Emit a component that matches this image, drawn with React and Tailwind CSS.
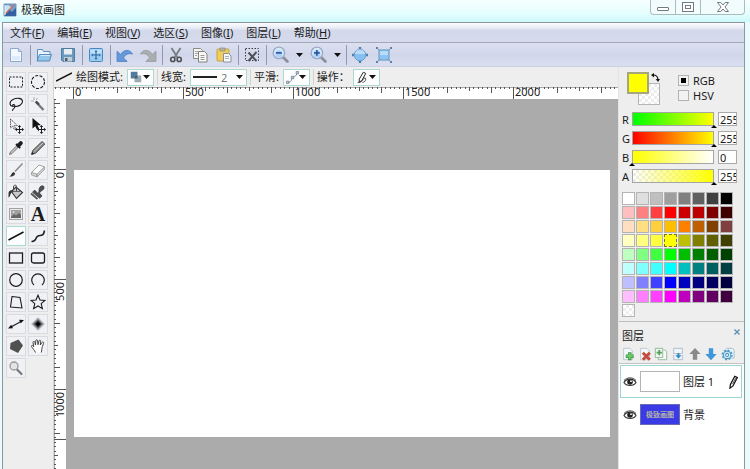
import { useState } from "react";

const MENUS = [
  ["文件", "F"],
  ["编辑", "E"],
  ["视图", "V"],
  ["选区", "S"],
  ["图像", "I"],
  ["图层", "L"],
  ["帮助", "H"],
];

function Svg({ size = 16, className = "", children }) {
  return (
    <svg width={size} height={size} viewBox="0 0 16 16" fill="none" className={className} aria-hidden="true">
      {children}
    </svg>
  );
}

function Caret() {
  return (
    <svg width="7" height="4" viewBox="0 0 7 4" className="shrink-0" aria-hidden="true">
      <path d="M0 0h7L3.5 4z" fill="#111" />
    </svg>
  );
}

function Magnifier({ plus }) {
  return (
    <Svg size={17}>
      <path d="M10.500 10.500l4 4" stroke="#8d8f98" strokeWidth="2.600" strokeLinecap="round" />
      <circle cx="6.500" cy="6.500" r="5.400" fill="#d8e9fa" stroke="#9aa9c6" strokeWidth="1.300" />
      <circle cx="6.500" cy="7.500" r="3.400" fill="#aed2f5" />
      <path d="M3.800 6.500h5.400" stroke="#26509b" strokeWidth="1.500" />
      {plus && <path d="M6.500 3.800v5.400" stroke="#26509b" strokeWidth="1.500" />}
    </Svg>
  );
}

const bar = {
  newFile: (
    <Svg>
      <path d="M2.500 1.500h8l3 3v10h-11z" fill="#f2f8ff" stroke="#8fa9cd" />
      <path d="M4 9h8v4H4z" fill="#dcebfb" />
      <path d="M10.500 1.500v3h3" fill="#c9dcf3" stroke="#8fa9cd" />
    </Svg>
  ),
  open: (
    <Svg>
      <path d="M1.500 13.500V2.500h5l1 2h6.500v3" fill="#e9f3fc" stroke="#5f8fba" />
      <path d="M1 14l2.500-6.500h12L13.500 14z" fill="#94c6ea" stroke="#4d86b8" strokeWidth=".9" />
      <path d="M4.500 8.500h9.500" stroke="#d0e8fa" />
    </Svg>
  ),
  save: (
    <Svg>
      <path d="M1.500 1.500h13v13H3l-1.500-1.500z" fill="#6a9abf" stroke="#517c9e" />
      <path d="M4 2h8v5.500H4z" fill="#e6eef2" />
      <path d="M4 10h8v4.500H4z" fill="#c3cdd3" />
      <path d="M5 11h2.500v3H5z" fill="#44637b" />
    </Svg>
  ),
  fit: (
    <Svg>
      <rect x="1.500" y="1.500" width="13" height="13" rx="1" fill="#9accf1" stroke="#4a87bf" />
      <path d="M2.500 2.500h11v4h-11z" fill="#bfe0f8" />
      <path d="M8 4v8M4 8h8" stroke="#2f6ba6" strokeWidth="1.200" />
      <path d="M8 3l1.500 1.800h-3zM8 13l1.500-1.800h-3zM3 8l1.800-1.500v3zM13 8l-1.800-1.500v3z" fill="#2f6ba6" />
    </Svg>
  ),
  undo: (
    <Svg size={17}>
      <path d="M1 5v9.500h9.500L7 11.200C9 7.500 12 6.500 15.500 7.600 13 2.800 7.500 3 4.300 8z" fill="#6699dc" stroke="#4a7fc4" strokeWidth=".8" />
    </Svg>
  ),
  redo: (
    <Svg size={17}>
      <path d="M15 5v9.500H5.500L9 11.200C7 7.500 4 6.500.5 7.600 3 2.800 8.500 3 11.700 8z" fill="#aaaeb0" stroke="#96999b" strokeWidth=".8" />
    </Svg>
  ),
  cut: (
    <Svg>
      <path d="M3.500 1l6 9.500M12.500 1l-6 9.500" stroke="#7b7f84" strokeWidth="1.900" />
      <circle cx="4.800" cy="12.400" r="2.100" stroke="#4d5156" strokeWidth="1.600" />
      <circle cx="11.200" cy="12.400" r="2.100" stroke="#4d5156" strokeWidth="1.600" />
    </Svg>
  ),
  copy: (
    <Svg>
      <path d="M1.500 1.500h7l2 2v8h-9z" fill="#f5f5f3" stroke="#8a8a88" />
      <path d="M3 4.500h4M3 6.500h4M3 8.500h2" stroke="#a5a5a5" />
      <path d="M6.500 4.500h6l2.500 2.500v8H6.500z" fill="#f8f8f6" stroke="#81817f" />
      <path d="M8.500 8.500h4M8.500 10.500h4M8.500 12.500h4" stroke="#989898" />
    </Svg>
  ),
  paste: (
    <Svg>
      <rect x="1" y="2" width="12" height="12" rx="1" fill="#f2cd58" stroke="#c7a245" />
      <path d="M4 1h5v3H4z" fill="#b5b4a5" stroke="#8a8982" strokeWidth=".7" />
      <path d="M7.500 6.500h5l2.500 2.500v6H7.500z" fill="#f7f8fa" stroke="#87909c" />
      <path d="M9 9.500h4M9 11.500h4" stroke="#a7b0bd" />
    </Svg>
  ),
  deselect: (
    <Svg>
      <rect x="1.500" y="1.500" width="13" height="12" stroke="#3a3b42" strokeDasharray="1.500 1.500" />
      <path d="M4.500 5.500l8 8.500M12.500 5l-8 9" stroke="#4c4e57" strokeWidth="1.900" />
    </Svg>
  ),
  actual: (
    <Svg>
      <path d="M8 0v3M8 13v3M0 8h3M13 8h3" stroke="#4f7eab" strokeWidth="2.400" />
      <circle cx="8" cy="8" r="5.800" fill="#86c0f0" stroke="#6f9cc9" />
      <path d="M3 7a5 4.500 0 0 1 10 0z" fill="#b9dcf8" />
    </Svg>
  ),
  expand: (
    <Svg>
      <path d="M1 1l3 3M15 1l-3 3M1 15l3-3M15 15l-3-3" stroke="#6b8db0" />
      <rect x="3" y="3" width="10" height="10" fill="#8cc4f2" stroke="#6794c1" />
      <path d="M4 4h8v4H4z" fill="#b8dcf8" />
      <path d="M0 0h2v2H0zM14 0h2v2h-2zM0 14h2v2H0zM14 14h2v2h-2z" fill="#5c7fa4" />
    </Svg>
  ),
};

function BarButton({ label, children }) {
  return (
    <button type="button" aria-label={label} className="flex h-6 w-6 items-center justify-center hover:bg-white/50">
      {children}
    </button>
  );
}

function BarCaret({ label }) {
  return (
    <button type="button" aria-label={label} aria-haspopup="menu" className="flex h-6 w-[14px] items-center justify-center">
      <Caret />
    </button>
  );
}

function Sep() {
  return (
    <span className="flex w-1 justify-center">
      <span className="h-5 w-px bg-[#9298ad]" />
    </span>
  );
}

const K = "#1d1d1f";
const TOOLS = [
  ["矩形选区", <Svg><rect x="1.500" y="3" width="13" height="10" stroke={K} strokeDasharray="2 1.300" /></Svg>],
  ["椭圆选区", <Svg><circle cx="8" cy="8" r="6.500" stroke={K} strokeDasharray="3 1.500" strokeWidth="1.100" /></Svg>],
  ["套索", <Svg><path d="M5 10.500C1 10 1 5.500 5 3.500s9-1.500 9.500 1.500-3.500 6-8 5.500c-2-.3-2.500-1.700-1-2s2 2 .8 3.500-2 1.500-1.800 2.800" stroke={K} strokeWidth="1.100" /></Svg>],
  ["魔棒", <Svg><path d="M5.500 5.500l8 8.500" stroke="#777" strokeWidth="2.400" /><path d="M6 5.500l3 3" stroke="#444" strokeWidth="2" /><path d="M4 1v3M1 5h3M7.500 2L6 4" stroke="#aaa" /></Svg>],
  ["移动选区", <Svg><path d="M2.500 1v9l2.200-2 1.500 3.500 1.500-.7L6.300 7.500h3z" stroke="#444" strokeWidth=".9" strokeDasharray="1.500 .8" /><path d="M11.500 8v7M8 11.500h7" stroke={K} /><path d="M11.500 7l1.700 2H9.800zM11.500 16l1.700-2H9.800zM7 11.500l2-1.700v3.400zM16 11.500l-2-1.700v3.400z" fill={K} /></Svg>],
  ["移动像素", <Svg><path d="M2.500 0v10.500l2.700-2.200L7 11.500l2-1-1.600-3.300H11z" fill="#111" /><path d="M11.500 8v7M8 11.500h7" stroke={K} /><path d="M11.500 7l1.700 2H9.800zM11.500 16l1.700-2H9.800zM7 11.500l2-1.700v3.400zM16 11.500l-2-1.700v3.400z" fill={K} /></Svg>],
  ["取色器", <Svg><path d="M1.500 14.500l1-2.500L9 5.500 10.500 7 4 13.500z" fill="#c9c9c9" stroke="#666" strokeWidth=".9" /><path d="M8 4l4.200 4.200" stroke={K} strokeWidth="1.800" /><path d="M10.500 5.500L12.800 3.200" stroke={K} strokeWidth="4" strokeLinecap="round" /></Svg>],
  ["铅笔", <Svg><path d="M1.500 14.500l1.200-4L12 1.500 14.800 4 5.600 13.300z" fill="#888" stroke="#444" strokeWidth=".9" /><path d="M4 11.500L13 3" stroke="#ccc" /><path d="M1.500 14.500l.7-2.300 1.700 1.600z" fill="#111" /></Svg>],
  ["画笔", <Svg><path d="M14.500 1.500L7 9.500" stroke="#8a8a8a" strokeWidth="1.500" /><path d="M1 14.500c2.500-.5 2-3.300 4.500-4.500l1.700 1.500c-.5 2.500-3.200 3.300-6.200 3z" fill="#333" /></Svg>],
  ["橡皮擦", <Svg><path d="M1.500 10.500L9 3l5.500 2-7.500 8.500z" fill="#fafafa" stroke="#999" strokeWidth=".9" /><path d="M1.500 10.500L7 12v3l-5.500-2zM7 12l7.500-7v2.500L7 15z" fill="#d1d1d1" stroke="#909090" strokeWidth=".7" /></Svg>],
  ["油漆桶", <Svg><path d="M3.500 7.500L8 3l6.500 5.500-6 6z" fill="#c9c9c9" stroke="#333" strokeWidth="1.100" /><path d="M5 7.500h8" stroke="#666" /><path d="M8.500 7V2.500C8.500.5 5.500.7 5.500 3v3" stroke="#444" /><path d="M5.500 6.500C2 5.500.5 7 .5 9.500v4c2 0 1.500-4.500 3.500-5z" fill="#333" /></Svg>],
  ["图章", <Svg><path d="M8 9.500c2-2.300 0-4 2-6.500 1.700-2.100 4.700-1.200 4 1.200C13 7 10.300 6.500 9.500 9l2.500 3-2.300 2.200L2.500 8.300 4.700 6z" fill="#505050" stroke="#333" strokeWidth=".7" /><path d="M1 9.500l6.500 5.500" stroke="#555" strokeWidth="1.800" /></Svg>],
  ["图片", <Svg><rect x="1.500" y="2.500" width="13" height="11" fill="#e9e9e9" stroke="#a2a2a2" /><rect x="3" y="4" width="10" height="8" fill="#a0a0a0" /><path d="M3 11l3-3 2 1.500 3-2.500 2 2v3H3z" fill="#666" /><circle cx="5.500" cy="6" r="1" fill="#ddd" /></Svg>],
  ["文字", "A"],
  ["直线", <Svg><path d="M.5 12l15-8" stroke="#111" strokeWidth="1.500" /></Svg>],
  ["曲线", <Svg><path d="M1.500 13.500c5.500.5 3.500-4.500 6.500-5.500s5.500.5 6.500-5.500" stroke="#222" strokeWidth="1.600" /></Svg>],
  ["矩形", <Svg><rect x="1.500" y="3" width="13" height="10" stroke={K} strokeWidth="1.300" /></Svg>],
  ["圆角矩形", <Svg><rect x="1.500" y="3" width="13" height="10" rx="2" stroke={K} strokeWidth="1.300" /></Svg>],
  ["椭圆", <Svg><circle cx="8" cy="8" r="6.300" stroke={K} strokeWidth="1.200" /></Svg>],
  ["弧形", <Svg><path d="M4 13a6.300 6.300 0 1 1 8 0" stroke={K} strokeWidth="1.200" /></Svg>],
  ["多边形", <Svg><path d="M4 2.500l8 1 2 10.500-11.500-1z" stroke={K} strokeWidth="1.100" /></Svg>],
  ["星形", <Svg><path d="M8 1.200l2 4.800 5 .4-3.800 3.300 1.200 5L8 12l-4.400 2.700 1.200-5L1 6.400 6 6z" stroke={K} strokeWidth="1.100" /></Svg>],
  ["箭头", <Svg><path d="M2 11.500L14 5" stroke={K} strokeWidth="1.200" /><path d="M0 12.500l3.200-3.700L5 12.300zM16 4l-5-.2 1.800 3.500z" fill="#111" /></Svg>],
  ["渐变", <Svg><path d="M8 1l7 7-7 7-7-7z" fill="#000" fillOpacity=".2" /><path d="M8 2.500L13.500 8 8 13.500 2.500 8z" fill="#000" fillOpacity=".3" /><path d="M8 4l4 4-4 4-4-4z" fill="#000" fillOpacity=".5" /><path d="M8 5.500L10.500 8 8 10.500 5.500 8z" fill="#000" /></Svg>],
  ["填充形状", <Svg><path d="M2.500 5L10.500 1.500 15 7.500 10 15 2 11z" fill="#505050" /></Svg>],
  ["抓手", <Svg><path d="M5.500 14.500C4.500 12 2.500 10.500 1.500 8.500c-.3-1.200 1.200-1.500 2.200.2L3 4.500c0-1.400 1.500-1.400 1.800-.2L5.500 7 5.800 2.700c.2-1.300 1.700-1.200 1.800 0L8 6.700l1-3.800c.4-1.200 1.800-.9 1.700.4L10.300 7l1.700-2.500c.8-1 2-.3 1.600.8-.8 2.500-1.600 3.500-1.800 6l-.5 3.200" fill="#fff" stroke="#333" strokeWidth=".9" /></Svg>],
  ["缩放", <Svg><path d="M9 9.500l4.500 4.500" stroke="#777" strokeWidth="2.200" strokeLinecap="round" /><circle cx="6" cy="6" r="4" fill="#e4e4e4" stroke="#999" strokeWidth="1.300" /></Svg>],
];

/* A major division of 500 units is 110px: 25 small steps of 4.4px. */
function tickPath(origin, length, vertical) {
  let d = "";
  const first = -Math.floor(origin / 4.4);
  for (let i = first; origin + i * 4.4 < length; i++) {
    const p = Math.round(origin + i * 4.4) - 0.5;
    const k = ((i % 25) + 25) % 25;
    let t = 2;
    if (k === 0) t = 12;
    else if (k % 10 === 0) t = 6;
    else if (k % 5 === 0) t = 4;
    d += vertical ? `M0 ${p}h${t}` : `M${p} 0v${t}`;
  }
  return d;
}
const H_TICKS = tickPath(20, 3400, false);
const V_TICKS = tickPath(71, 2400, true);
const MARKS = Array.from({ length: 20 }, (_, i) => i);

function HRuler() {
  return (
    <svg className="block h-3 w-full shrink-0 bg-white" aria-hidden="true">
      <path d="M0 .5h4000" stroke="#aaa" />
      <path d={H_TICKS} stroke="#555" />
      {MARKS.map((i) => (
        <text key={i} x={21 + i * 110} y="9" fontSize="11" fill="#222">
          {i * 500}
        </text>
      ))}
    </svg>
  );
}

function VRuler() {
  return (
    <svg className="block h-full w-3 shrink-0 bg-white" aria-hidden="true">
      <path d="M.5 0v3000" stroke="#aaa" />
      <path d={V_TICKS} stroke="#555" />
      <path d="M0 340.500h12" stroke="#555" />
      {MARKS.map((i) => {
        const y = 73 + i * 110;
        return (
          <text key={i} x="10" y={y} fontSize="11" fill="#222" textAnchor="end" transform={`rotate(-90 10 ${y})`}>
            {i * 500}
          </text>
        );
      })}
    </svg>
  );
}

const PALETTE = [
  "#ffffff", "#dfdfdf", "#bfbfbf", "#9f9f9f", "#808080", "#606060", "#404040", "#000000",
  "#ffbfbf", "#ff8080", "#ff4040", "#ff0000", "#cc0000", "#bf0000", "#800000", "#400000",
  "#ffdfbf", "#ffdf80", "#ffcf40", "#ffbf00", "#ff8000", "#bf6000", "#804000", "#804040",
  "#ffffbf", "#ffff80", "#ffff40", "#ffff00", "#bfbf00", "#808000", "#606000", "#404000",
  "#bfffbf", "#80ff80", "#40ff40", "#00ff00", "#00bf00", "#008000", "#006000", "#004000",
  "#bfffff", "#80ffff", "#40ffff", "#00ffff", "#00bfbf", "#008080", "#006060", "#004040",
  "#bfbfff", "#8080ff", "#4040ff", "#0000ff", "#0000bf", "#000080", "#000060", "#000040",
  "#ffbfff", "#ff80ff", "#ff40ff", "#ff00ff", "#bf00bf", "#800080", "#600060", "#400040",
];

const CHECKER = "bg-[repeating-conic-gradient(#ededed_0_25%,#ffffff_0_50%)] bg-[length:6px_6px]";

const CHANNELS = [
  ["R", 255, "bg-[linear-gradient(to_right,#00ff00,#ffff00)]"],
  ["G", 255, "bg-[linear-gradient(to_right,#ff0000,#ffff00)]"],
  ["B", 0, "bg-[linear-gradient(to_right,#ffff00,#ffffff)]"],
  ["A", 255, "bg-[linear-gradient(to_right,#ffff0000,#ffff00),repeating-conic-gradient(#ededed_0_25%,#ffffff_0_50%)] bg-[length:100%_100%,6px_6px]"],
];

function Channel({ name, initial, gradient }) {
  const [value, setValue] = useState(initial);
  return (
    <div className="flex h-[19px] items-start">
      <label htmlFor={`ch-${name}`} className="w-[10px] shrink-0 leading-4">
        {name}
      </label>
      <div className="relative flex-1">
        <input
          id={`ch-${name}`}
          type="range"
          min="0"
          max="255"
          value={value}
          onChange={(e) => setValue(Number(e.target.value))}
          className={`block h-[14px] w-full appearance-none border border-[#a5a5a5] [&::-webkit-slider-thumb]:opacity-0 ${gradient}`}
        />
        <svg
          width="6"
          height="3"
          viewBox="0 0 6 3"
          className="pointer-events-none absolute top-[13px] -ml-[3px]"
          style={{ left: `${(value / 255) * 100}%` }}
          aria-hidden="true"
        >
          <path d="M3 0l3 3H0z" fill="#000" />
        </svg>
      </div>
      <input
        aria-label={`${name} 数值`}
        value={value}
        onChange={(e) => setValue(Math.min(255, Number(e.target.value) || 0))}
        className="ml-1 h-[14px] w-[19px] shrink-0 border border-[#aaa] bg-white pl-px leading-3 outline-none"
      />
    </div>
  );
}

function Eye() {
  return (
    <svg width="14" height="10" viewBox="0 0 14 10" fill="none" aria-hidden="true">
      <path d="M1 5.500C3.500 1 10.500 1 13 5.500 10.500 9.500 3.500 9.500 1 5.500z" fill="#fff" stroke="#333" strokeWidth="1.200" />
      <circle cx="7" cy="5" r="2.800" fill="#222" />
      <circle cx="8" cy="4.200" r=".9" fill="#fff" />
      <path d="M1 3.500C4 0 10 0 13 3.500" stroke="#444" />
    </svg>
  );
}

const PAGE = <path d="M3 1.500h7l3 3v10H3z" fill="#f3f8fb" stroke="#b4c3c9" />;
const LAYER_ACTIONS = [
  ["新建图层", <Svg size={14}>{PAGE}<path d="M10 6v9M5.500 10.500h9" stroke="#4a9850" strokeWidth="4" /><path d="M10 7v7M6.500 10.500h7" stroke="#6ccb69" strokeWidth="2" /></Svg>],
  ["删除图层", <Svg size={14}>{PAGE}<path d="M5.500 6.500l8 8M13.500 6.500l-8 8" stroke="#c64a3e" strokeWidth="3.400" /></Svg>],
  ["复制图层", <Svg size={14}><path d="M5 5.500V14.500h9.500V5l-2-1.500H11" fill="#f7faf7" stroke="#8fb397" /><path d="M1.500 1.500h8.500v10.500H1.500z" fill="#eef6ee" stroke="#8eb195" /><path d="M6 3.500v6M3 6.500h6" stroke="#4fa257" strokeWidth="2" /></Svg>],
  ["合并图层", <Svg size={14}><path d="M3 1.500h10v6H3zM3 9v5.500h10V9" fill="#edf4fa" stroke="#a9bac8" /><path d="M8.500 7v3" stroke="#2b7db8" strokeWidth="2.200" /><path d="M5 9.500h7l-3.500 3.500z" fill="#2b8bcb" /></Svg>],
  ["上移图层", <Svg size={14}><path d="M8 1l6.500 7H10.500v6.500h-5V8h-4z" fill="#8a8a8a" /></Svg>],
  ["下移图层", <Svg size={14}><path d="M8 15l6.500-7H10.500V1.500h-5V8h-4z" fill="#3d97d9" /></Svg>],
  ["图层属性", <Svg size={14}><path d="M6 1.500h7l2 2v9H9" fill="#eef5fa" stroke="#9ab8ca" /><circle cx="7" cy="9" r="5.500" stroke="#4b9ac5" strokeWidth="1.600" strokeDasharray="2.300 2" /><circle cx="7" cy="9" r="4.300" fill="#d3eaf5" stroke="#4b9ac5" strokeWidth="1.200" /><circle cx="7" cy="9" r="1.700" fill="#fff" stroke="#4b9ac5" strokeWidth="1.200" /></Svg>],
];

function Pencil({ size = 14 }) {
  return (
    <Svg size={size}>
      <path d="M5 11L10 1.500l3 1.500-5 9.500-3.500 2.500z" fill="#fff" stroke="#111" strokeWidth="1.400" />
      <path d="M7.500 10.500l3.500-7" stroke="#333" />
    </Svg>
  );
}

function OptionSep() {
  return <span className="mx-[3px] h-4 w-px shrink-0 bg-[#d2d2d2]" />;
}

const dropBox = "flex h-[17px] shrink-0 items-center justify-between border border-[#abd8d1] bg-[#fdfdfd] pl-[2px] pr-[3px]";

export default function App() {
  const [tool, setTool] = useState(14);
  const [model, setModel] = useState("RGB");
  const [color, setColor] = useState(27);

  return (
    <div className="flex h-screen flex-col overflow-hidden bg-[#e9fbfc] font-['Noto_Sans','Noto_Sans_CJK_SC',sans-serif] text-[11px] leading-4 text-[#1b1b1b]">
      <header className="flex h-[22px] shrink-0 items-start justify-between bg-[linear-gradient(to_bottom,#f7ffff,#e6fefe_60%,#cdf9fa)] pl-[3px] pr-[5px]">
        <div className="flex items-center gap-1 pt-[2px]">
          <svg width="14" height="14" viewBox="0 0 14 14" fill="none" aria-hidden="true">
            <path d="M1 1h12v12H1z" fill="#6d9dcd" stroke="#7a90b3" />
            <path d="M2 3l3-1 3 2-3 5-3 1z" fill="#c9e0f1" />
            <path d="M2 12l4-6 3 3 4-4v8H2z" fill="#34619f" />
            <path d="M2 11l9-9" stroke="#d5715a" strokeWidth="1.300" />
            <path d="M2 2v10" stroke="#eff6fa" />
          </svg>
          <h1>极致画图</h1>
        </div>
        <div className="flex h-[15px] rounded-b-[4px] border border-t-0 border-[#a9bcbf] bg-[#f3fcfc]">
          <button type="button" aria-label="最小化" className="flex w-[25px] items-end justify-center border-r border-[#a9bcbf] pb-[3px]">
            <span className="h-1 w-3 rounded-[1px] border border-[#727a80] bg-white" />
          </button>
          <button type="button" aria-label="最大化" className="flex w-[25px] items-center justify-center border-r border-[#a9bcbf]">
            <span className="flex h-[10px] w-3 items-center justify-center border border-[#727a80] bg-white">
              <span className="h-1 w-[6px] border border-[#727a80]" />
            </span>
          </button>
          <button type="button" aria-label="关闭" className="flex w-[43px] items-center justify-center">
            <svg width="12" height="10" viewBox="0 0 12 10" fill="none" aria-hidden="true">
              <path d="M.5.5h3.300L6 3 8.200.5h3.300L8 5l3.500 4.500H8.200L6 7 3.800 9.500H.5L4 5z" fill="#fff" stroke="#727a80" />
            </svg>
          </button>
        </div>
      </header>

      <div className="ml-[2px] mr-[5px] flex min-h-0 flex-1 flex-col border border-b-0 border-[#8d969d] bg-[#eeeeee]">
        <nav className="flex h-[19px] shrink-0 items-center gap-[13px] bg-[linear-gradient(to_bottom,#fbfcfe,#e9ecf6_25%,#d3d8eb_40%,#d5daec)] pl-[7px]">
          {MENUS.map(([name, key]) => (
            <button type="button" key={key} className="whitespace-nowrap">
              {name}(<span className="underline">{key}</span>)
            </button>
          ))}
        </nav>

        <div role="toolbar" aria-label="主工具栏" className="flex h-[25px] shrink-0 items-center border-b border-t border-b-[#ccd1e2] border-t-[#a4a9ba] bg-[linear-gradient(to_bottom,#dce0f0,#d1d7ea_50%,#d9deef)] pl-px">
          <BarButton label="新建">{bar.newFile}</BarButton>
          <Sep />
          <BarButton label="打开">{bar.open}</BarButton>
          <BarButton label="保存">{bar.save}</BarButton>
          <Sep />
          <BarButton label="画布大小">{bar.fit}</BarButton>
          <Sep />
          <BarButton label="撤销">{bar.undo}</BarButton>
          <BarButton label="重做">{bar.redo}</BarButton>
          <Sep />
          <BarButton label="剪切">{bar.cut}</BarButton>
          <BarButton label="复制">{bar.copy}</BarButton>
          <BarButton label="粘贴">{bar.paste}</BarButton>
          <Sep />
          <BarButton label="取消选区">{bar.deselect}</BarButton>
          <Sep />
          <BarButton label="缩小"><Magnifier /></BarButton>
          <BarCaret label="缩小选项" />
          <BarButton label="放大"><Magnifier plus /></BarButton>
          <BarCaret label="放大选项" />
          <Sep />
          <BarButton label="适合窗口">{bar.actual}</BarButton>
          <BarButton label="实际大小">{bar.expand}</BarButton>
        </div>

        <div className="flex min-h-0 flex-1">
          <aside aria-label="工具" className="w-[51px] shrink-0 border-r border-[#d5d5d5] pl-[3px] pt-[5px]">
            <div className="grid grid-cols-[20px_20px] gap-[2px]">
              {TOOLS.map(([name, icon], i) => (
                <button
                  type="button"
                  key={name}
                  aria-label={name}
                  aria-pressed={tool === i}
                  onClick={() => setTool(i)}
                  className={`flex h-5 w-5 items-center justify-center border ${tool === i ? "border-[#a8dcd9] bg-white" : "border-[#d9dbe0] bg-[#f0f1f5]"}`}
                >
                  {icon === "A" ? (
                    <span className="font-['Liberation_Serif',serif] text-[20px] font-bold leading-5">A</span>
                  ) : (
                    icon
                  )}
                </button>
              ))}
            </div>
          </aside>

          <main className="flex min-w-0 flex-1 flex-col">
            <div className="flex h-5 shrink-0 items-center overflow-hidden whitespace-nowrap pl-[2px]">
              <Svg><path d="M0 12L16 4" stroke="#111" strokeWidth="1.500" /></Svg>
              <span className="ml-1 mr-1">绘图模式:</span>
              <button type="button" aria-label="绘图模式" aria-haspopup="listbox" className={`${dropBox} w-[27px]`}>
                <Svg size={12}>
                  <path d="M1 1h9v9H1z" fill="#527a9c" />
                  <path d="M6 6h9v9H6z" fill="#9caab2" />
                  <path d="M6 6h4v4H6z" fill="#3f6079" />
                </Svg>
                <Caret />
              </button>
              <OptionSep />
              <label htmlFor="line-width" className="mr-1">线宽:</label>
              <div className={`${dropBox} relative w-[57px]`}>
                <span className="h-[2px] w-6 bg-[#222]" />
                <select id="line-width" defaultValue="2" className="absolute inset-0 appearance-none bg-transparent pl-[30px] text-[#777] outline-none">
                  <option>1</option>
                  <option>2</option>
                  <option>3</option>
                </select>
                <Caret />
              </div>
              <OptionSep />
              <span className="mr-1">平滑:</span>
              <button type="button" aria-label="平滑" aria-haspopup="listbox" className={`${dropBox} w-[27px]`}>
                <Svg size={13}>
                  <path d="M2 14c6 0 4-4 6-6s4 0 6-6" stroke="#78879a" strokeWidth="1.200" />
                  <path d="M.5 12.500h3v3h-3zM6.500 6.500h3v3h-3zM12.500.5h3v3h-3z" fill="#b9c6d4" stroke="#72849a" />
                </Svg>
                <Caret />
              </button>
              <OptionSep />
              <span className="mr-[3px]">操作：</span>
              <button type="button" aria-label="操作" aria-haspopup="listbox" className={`${dropBox} w-[27px]`}>
                <Svg size={13}>
                  <path d="M4 10l5-8.500 3 1.500-5 9-3 1.500z" fill="#fff" stroke="#222" strokeWidth="1.200" />
                  <path d="M2 14c3 1 6-2 7-4s3-2 3 0-2 4-4 4" stroke="#222" />
                </Svg>
                <Caret />
              </button>
            </div>
            <HRuler />
            <div className="flex min-h-0 flex-1">
              <VRuler />
              <div className="flex flex-1 bg-[#ababab] pb-8 pl-2 pr-2 pt-[71px]">
                <canvas aria-label="画布" className="min-h-0 w-full bg-white" />
              </div>
            </div>
          </main>

          <aside className="flex w-[126px] shrink-0 flex-col border-l border-[#e4e4e4]">
            <section aria-label="颜色" className="shrink-0 border-b border-[#bdbdbd] pb-1 pl-[3px] pt-[5px]">
              <div className="flex h-[39px] pl-[5px]">
                <div className="relative h-[33px] w-[33px]">
                  <button type="button" aria-label="背景色" className={`absolute bottom-0 right-0 h-[22px] w-[22px] border border-[#b5b5b5] ${CHECKER}`} />
                  <button
                    type="button"
                    aria-label="前景色"
                    className="absolute left-0 top-0 h-[22px] w-[22px] border-2 border-[#a6a67c]"
                    style={{ backgroundColor: PALETTE[color] }}
                  />
                  <button type="button" aria-label="交换颜色" className="absolute right-0 top-px">
                    <svg width="9" height="9" viewBox="0 0 9 9" fill="none" aria-hidden="true">
                      <path d="M2 2c3 0 5 2 5 5" stroke="#111" strokeWidth="1.200" />
                      <path d="M0 2l3-2v4.500zM7 9L4.800 6H9z" fill="#111" />
                    </svg>
                  </button>
                </div>
                <div className="ml-[18px] mt-px flex flex-col">
                  {["RGB", "HSV"].map((m) => (
                    <label key={m} className="flex h-[15px] items-center gap-1">
                      <input
                        type="radio"
                        name="model"
                        checked={model === m}
                        onChange={() => setModel(m)}
                        className="h-[11px] w-[11px] appearance-none border border-[#b3b3b3] bg-[#f2f2f2] checked:bg-black checked:shadow-[inset_0_0_0_2px_#f2f2f2]"
                      />
                      {m}
                    </label>
                  ))}
                </div>
              </div>

              <div className="mr-[7px] mt-px">
                {CHANNELS.map(([name, initial, gradient]) => (
                  <Channel key={name} name={name} initial={initial} gradient={gradient} />
                ))}
              </div>

              <div className="mt-1 grid grid-cols-[repeat(8,13px)] gap-px">
                {PALETTE.map((c, i) => (
                  <button
                    type="button"
                    key={i}
                    aria-label={c}
                    onClick={() => setColor(i)}
                    className={`h-[13px] w-[13px] border ${color === i ? "border-dashed border-[#77773a]" : "border-[#b4b4b4]"}`}
                    style={{ backgroundColor: c }}
                  />
                ))}
                <button type="button" aria-label="透明" className={`h-[13px] w-[13px] border border-[#b4b4b4] ${CHECKER}`} />
              </div>
            </section>

            <section aria-label="图层" className="flex min-h-0 flex-1 flex-col">
              <div className="flex h-6 shrink-0 items-center justify-between pl-[3px] pr-1 pt-[3px]">
                <h2>图层</h2>
                <button type="button" aria-label="关闭图层面板" className="mb-2">
                  <svg width="6" height="6" viewBox="0 0 6 6" aria-hidden="true">
                    <path d="M.5.5l5 5M5.500.5l-5 5" stroke="#568eae" strokeWidth="1.200" />
                  </svg>
                </button>
              </div>
              <div className="flex h-[18px] shrink-0 items-center justify-between border-b border-[#c2c2c2] pb-[2px] pl-[2px] pr-[9px]">
                {LAYER_ACTIONS.map(([name, icon]) => (
                  <button type="button" key={name} aria-label={name}>
                    {icon}
                  </button>
                ))}
              </div>
              <ul className="min-h-0 flex-1 bg-white pl-px pr-[2px] pt-px">
                <li className="flex h-[33px] items-center border border-[#9bd6d3] pl-[2px] pr-px">
                  <button type="button" aria-label="显示图层 1"><Eye /></button>
                  <span className="ml-[3px] h-[21px] w-10 border border-[#b4b4b4] bg-white" />
                  <span className="ml-[3px] flex-1">图层 1</span>
                  <Pencil />
                </li>
                <li className="flex h-[33px] items-center border border-transparent pl-[2px]">
                  <button type="button" aria-label="显示背景"><Eye /></button>
                  <span className="ml-[3px] flex h-[21px] w-10 items-center justify-center border border-[#6a6ab5] bg-[#3b3be6] text-[7px] font-bold leading-none text-[#b5b4a8]">
                    极致画图
                  </span>
                  <span className="ml-[3px]">背景</span>
                </li>
              </ul>
            </section>
          </aside>
        </div>
      </div>
    </div>
  );
}
